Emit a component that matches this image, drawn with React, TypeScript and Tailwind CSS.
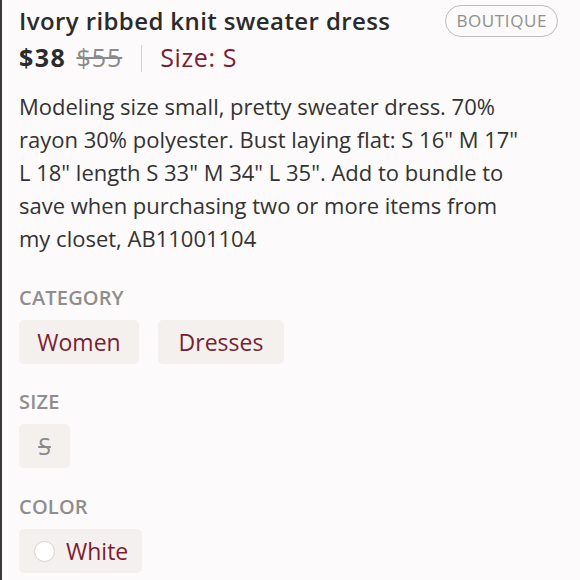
import React from "react";

export default function App() {
  const font = { fontFamily: '"Open Sans", "Lato", sans-serif' };
  const lines = [
    "Modeling size small, pretty sweater dress. 70%",
    'rayon 30% polyester. Bust laying flat: S 16" M 17"',
    'L 18" length S 33" M 34" L 35". Add to bundle to',
    "save when purchasing two or more items from",
    "my closet, AB11001104",
  ];
  return (
    <div
      className="w-[580px] h-[580px] overflow-hidden bg-[#fcfafa] border-l-2 border-[#3a3a3a] text-[#333333]"
      style={font}
    >
      <div className="pl-[17px] pr-[22px] pt-[5px]">
        <div className="flex items-center justify-between">
          <div className="text-[24px] font-semibold leading-[32px] tracking-[0.4px] text-[#2b2b2b]">
            Ivory ribbed knit sweater dress
          </div>
          <div className="h-[32px] px-[10px] rounded-full border border-[#bdbdbd] flex items-center text-[17px] tracking-[0.6px] text-[#8f8f8f]">
            BOUTIQUE
          </div>
        </div>
        <div className="flex items-center mt-[5px] h-[32px]">
          <span className="text-[25px] font-bold tracking-[1.5px] text-[#2b2b2b]">$38</span>
          <span className="ml-[10px] text-[25px] tracking-[1px] text-[#8a8a8a] line-through">$55</span>
          <span className="ml-[19px] w-px h-[27px] bg-[#cfcfcf]" />
          <span className="ml-[18px] text-[25px] tracking-[0.6px] text-[#7b1e33]">Size: S</span>
        </div>
        <p className="mt-[16px] text-[22px] leading-[33px] text-[#333333] whitespace-nowrap">
          {lines.map((l, i) => (
            <React.Fragment key={i}>
              {l}
              {i < lines.length - 1 && <br />}
            </React.Fragment>
          ))}
        </p>
        <div className="mt-[30px] text-[20px] font-semibold tracking-[0.2px] text-[#8e8e8e] leading-[26px]">CATEGORY</div>
        <div className="flex gap-[19px] mt-[9px]">
          <div className="h-[44px] w-[120px] rounded-[5px] bg-[#f3f0ee] flex items-center justify-center text-[23px] text-[#7b1e33]">Women</div>
          <div className="h-[44px] w-[126px] rounded-[5px] bg-[#f3f0ee] flex items-center justify-center text-[23px] text-[#7b1e33]">Dresses</div>
        </div>
        <div className="mt-[25px] text-[20px] font-semibold tracking-[0.2px] text-[#8e8e8e] leading-[26px]">SIZE</div>
        <div className="flex mt-[9px]">
          <div className="h-[44px] w-[51px] rounded-[5px] bg-[#f3f0ee] flex items-center justify-center text-[23px] text-[#8a8a8a] line-through">S</div>
        </div>
        <div className="mt-[26px] text-[20px] font-semibold tracking-[0.2px] text-[#8e8e8e] leading-[26px]">COLOR</div>
        <div className="flex mt-[9px]">
          <div className="h-[44px] w-[123px] pl-[15px] rounded-[5px] bg-[#f3f0ee] flex items-center gap-[11px] text-[23px] text-[#7b1e33]">
            <span className="w-[21px] h-[21px] rounded-full bg-white border border-[#d6d3d1]" />
            White
          </div>
        </div>
      </div>
    </div>
  );
}
